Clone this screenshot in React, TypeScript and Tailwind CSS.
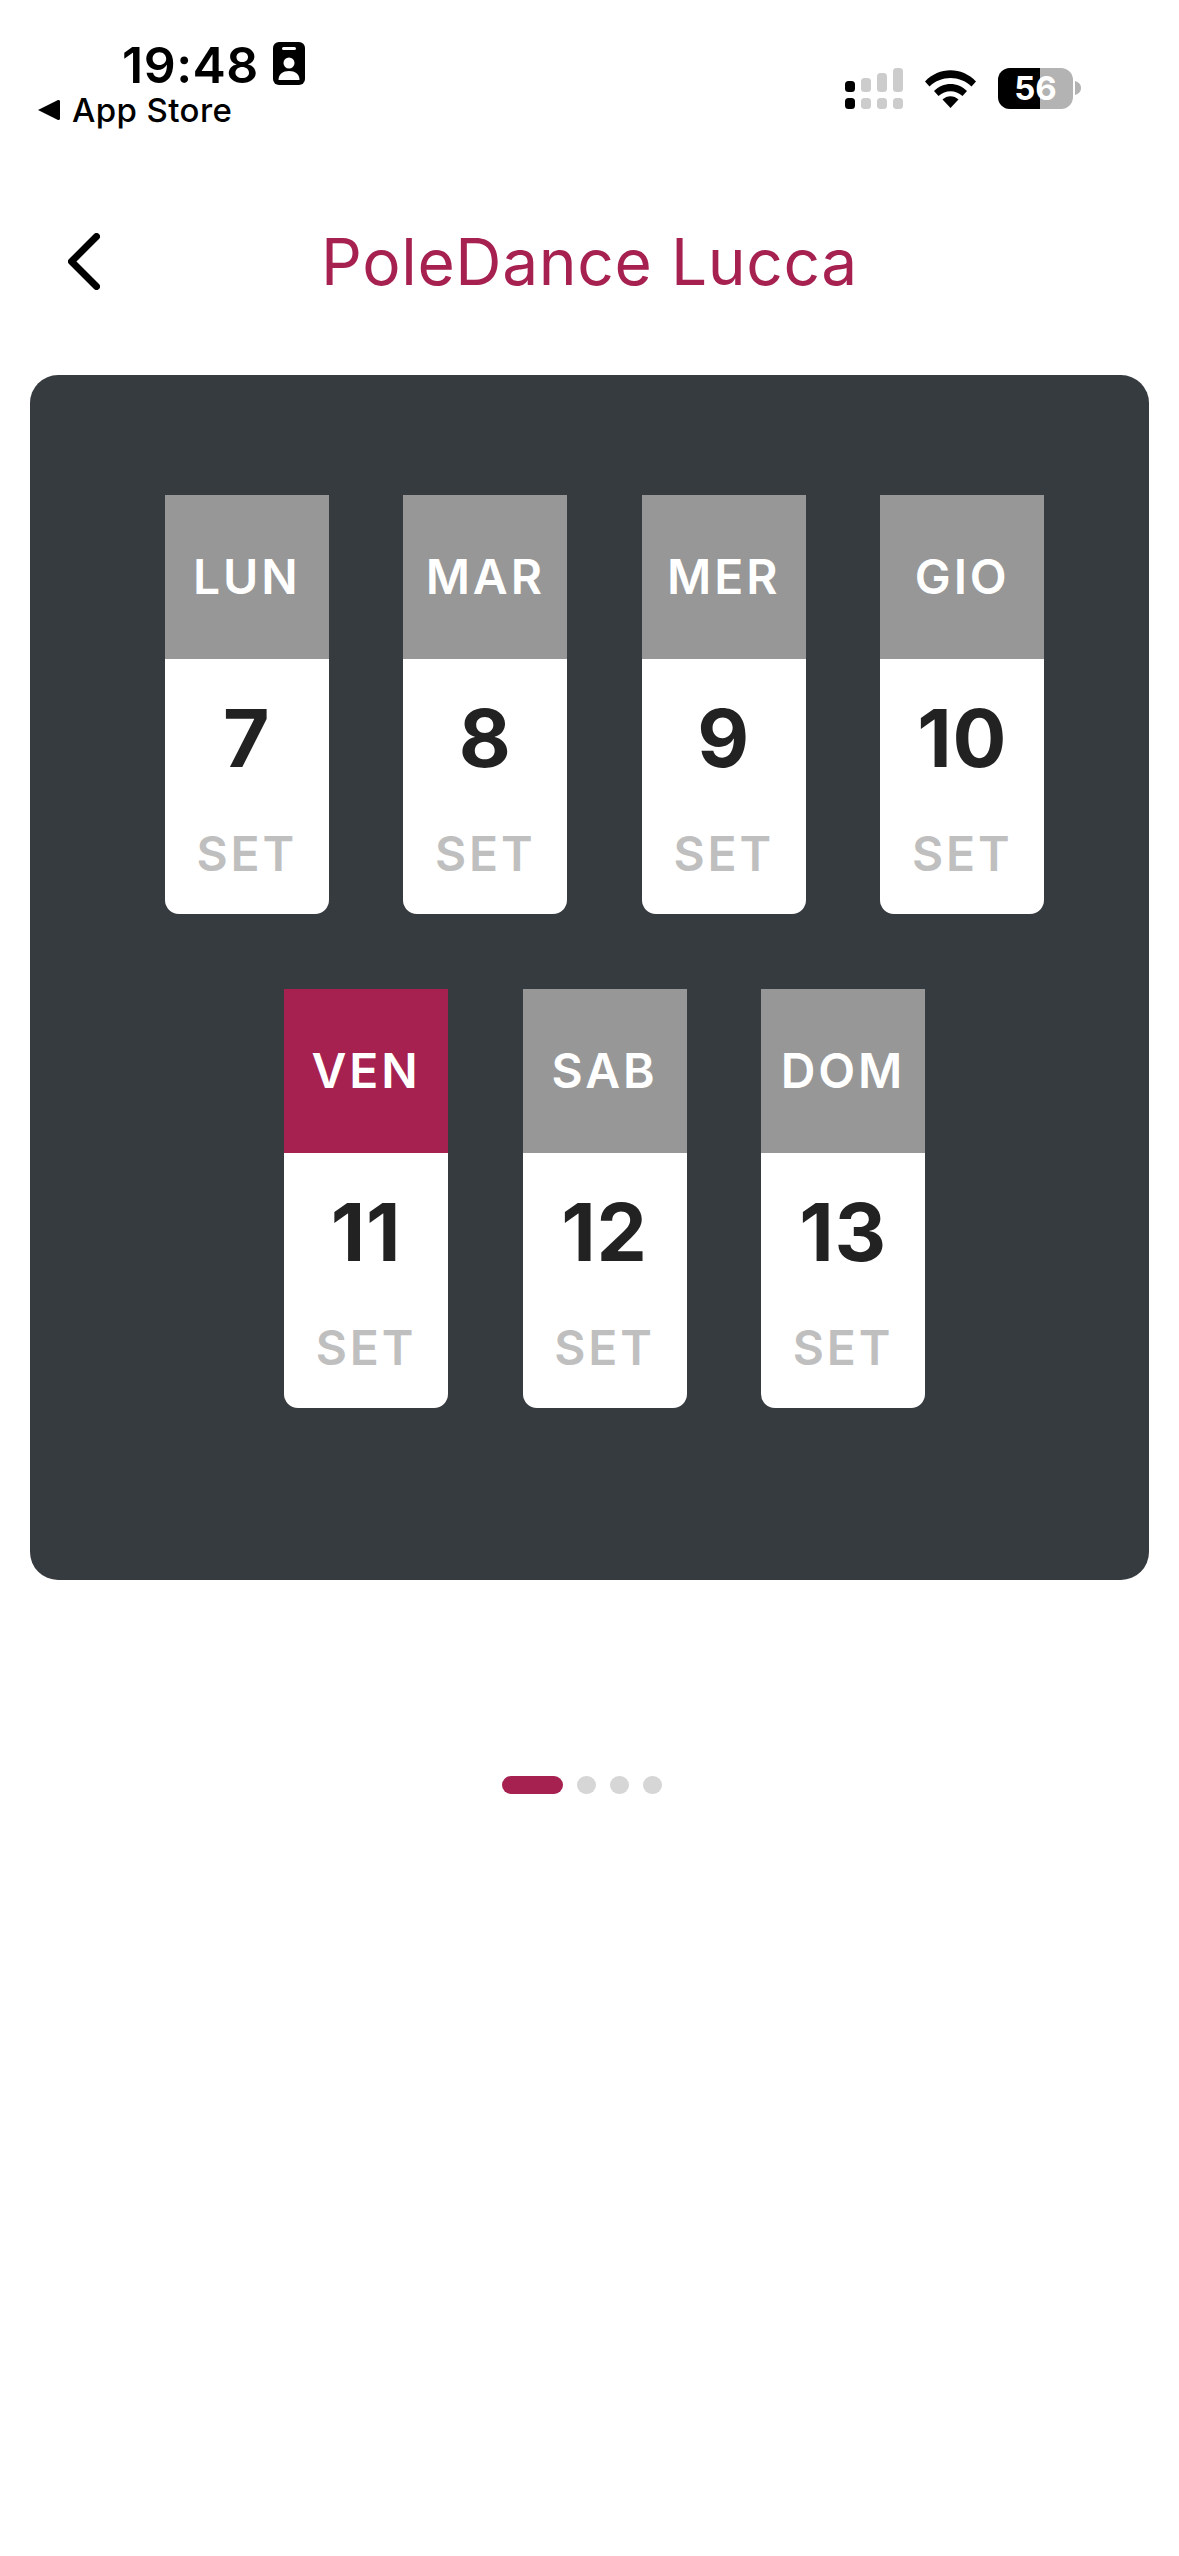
const WEEK_ONE = [
  { day: "LUN", date: 7 },
  { day: "MAR", date: 8 },
  { day: "MER", date: 9 },
  { day: "GIO", date: 10 },
];

const WEEK_TWO = [
  { day: "VEN", date: 11, active: true },
  { day: "SAB", date: 12 },
  { day: "DOM", date: 13 },
];

const FONT = { fontFamily: "Inter, 'Noto Sans', sans-serif" };

function DayCard({ day, date, active }: { day: string; date: number; active?: boolean }) {
  return (
    <div className="w-[164px] h-[419px] flex flex-col overflow-hidden rounded-b-[14px] bg-white">
      <div
        className={`h-[164px] flex items-center justify-center text-[48px] font-semibold tracking-[0.06em] text-white ${
          active ? "bg-[#a62150]" : "bg-[#979797]"
        }`}
      >
        <span>{day}</span>
      </div>
      <div className="flex flex-1 flex-col items-center">
        <span className="mt-[34px] text-[80px] leading-[90px] font-bold tracking-[0.01em] text-[#222222]">{date}</span>
        <span className="mt-[43px] text-[48px] leading-[56px] font-semibold tracking-[0.06em] text-[#bfbfbf]">
          SET
        </span>
      </div>
    </div>
  );
}

function StatusBar() {
  return (
    <div className="h-[130px] flex justify-between pl-[38px] pr-[98px] text-black">
      <div className="pt-[37px]">
        <div className="flex items-center pl-[84px]">
          <span className="text-[50px] leading-[56px] font-semibold tracking-[0.01em]">19:48</span>
          <svg width="32" height="43" viewBox="0 0 32 43" className="ml-[14px] mt-[-4px]">
            <rect width="32" height="43" rx="6" fill="#000" />
            <rect x="9" y="5" width="14" height="3" rx="1.5" fill="#fff" />
            <circle cx="16" cy="21" r="5.5" fill="#fff" />
            <path d="M5.5 38c0-6 4.5-9 10.500-9s10.500 3 10.500 9z" fill="#fff" />
          </svg>
        </div>
        <div className="flex items-center mt-[-2px]">
          <svg width="22" height="20" viewBox="0 0 22 20">
            <path d="M0 10 20 0a1.500 1.500 0 0 1 2 1.500v17a1.500 1.500 0 0 1-2 1.500z" fill="#000" />
          </svg>
          <span className="ml-[12px] text-[33px] leading-[38px] font-medium tracking-[0.012em]">App Store</span>
        </div>
      </div>
      <div className="flex items-start pt-[68px]">
        <svg width="58" height="41" viewBox="0 0 58 41">
          <rect x="0" y="13" width="10" height="11" rx="3.500" fill="#000" />
          <rect x="0" y="30" width="10" height="11" rx="3.500" fill="#000" />
          <rect x="16" y="10" width="10" height="14" rx="3.500" fill="#cccccc" />
          <rect x="16" y="30" width="10" height="11" rx="3.500" fill="#cccccc" />
          <rect x="32" y="5" width="10" height="19" rx="3.500" fill="#cccccc" />
          <rect x="32" y="30" width="10" height="11" rx="3.500" fill="#cccccc" />
          <rect x="48" y="0" width="10" height="24" rx="3.500" fill="#cccccc" />
          <rect x="48" y="30" width="10" height="11" rx="3.500" fill="#cccccc" />
        </svg>
        <svg width="51" height="38" viewBox="0 0 51 38" className="ml-[22px] mt-[2px]">
          <path d="M0 11.500C14-3.500 37-3.500 51 11.500l-4.500 5C35 5 16 5 4.500 16.500z" fill="#000" />
          <path d="M9 21c9-9.500 24-9.500 33 0l-4.500 5c-7-6.500-17-6.500-24 0z" fill="#000" />
          <path d="M17.500 29.500c4.500-4.500 11.500-4.500 16 0L25.500 38z" fill="#000" />
        </svg>
        <div className="relative ml-[22px] w-[75px] h-[41px] overflow-hidden rounded-[12px] bg-[#b3b3b3] flex items-center justify-center">
          <div className="absolute inset-y-0 left-0 w-[42px] bg-black" />
          <span className="relative text-[33px] leading-none font-bold text-white">56</span>
        </div>
        <svg width="6" height="14" viewBox="0 0 6 14" className="ml-[2px] mt-[13px]">
          <path d="M0 0c3.500 1 6 3.500 6 7s-2.500 6-6 7z" fill="#b3b3b3" />
        </svg>
      </div>
    </div>
  );
}

export default function App() {
  return (
    <div className="min-h-[2556px] w-full bg-white" style={FONT}>
      <StatusBar />

      {/* Header */}
      <div className="mt-[73px] h-[115px] grid grid-cols-[1fr_auto_1fr] items-center pt-[2px]">
        <div className="pl-[68px]">
          <svg width="32" height="57" viewBox="0 0 32 57" className="block">
            <path
              d="M28.500 3.500 3.500 28.500 28.500 53.500"
              fill="none"
              stroke="#000"
              strokeWidth="7"
              strokeLinecap="round"
              strokeLinejoin="round"
            />
          </svg>
        </div>
        <h1 className="text-[64px] leading-[76px] font-normal text-[#a62150] tracking-[0.01em]">PoleDance Lucca</h1>
        <div />
      </div>

      {/* Day picker */}
      <div className="mx-[30px] mt-[57px] flex flex-col gap-[75px] rounded-[28px] bg-[#363b40] pt-[120px] pb-[172px] pl-[30px]">
        <div className="flex justify-center gap-[74.5px]">
          {WEEK_ONE.map((d) => (
            <DayCard key={d.day} day={d.day} date={d.date} />
          ))}
        </div>
        <div className="flex justify-center gap-[74.5px]">
          {WEEK_TWO.map((d) => (
            <DayCard key={d.day} day={d.day} date={d.date} active={d.active} />
          ))}
        </div>
      </div>

      {/* Pager */}
      <div className="mt-[196px] ml-[502px] flex items-center gap-[14px]">
        <div className="h-[18px] w-[61px] rounded-full bg-[#a62150]" />
        <div className="h-[18px] w-[19px] rounded-full bg-[#d6d6d6]" />
        <div className="h-[18px] w-[19px] rounded-full bg-[#d6d6d6]" />
        <div className="h-[18px] w-[19px] rounded-full bg-[#d6d6d6]" />
      </div>
    </div>
  );
}
